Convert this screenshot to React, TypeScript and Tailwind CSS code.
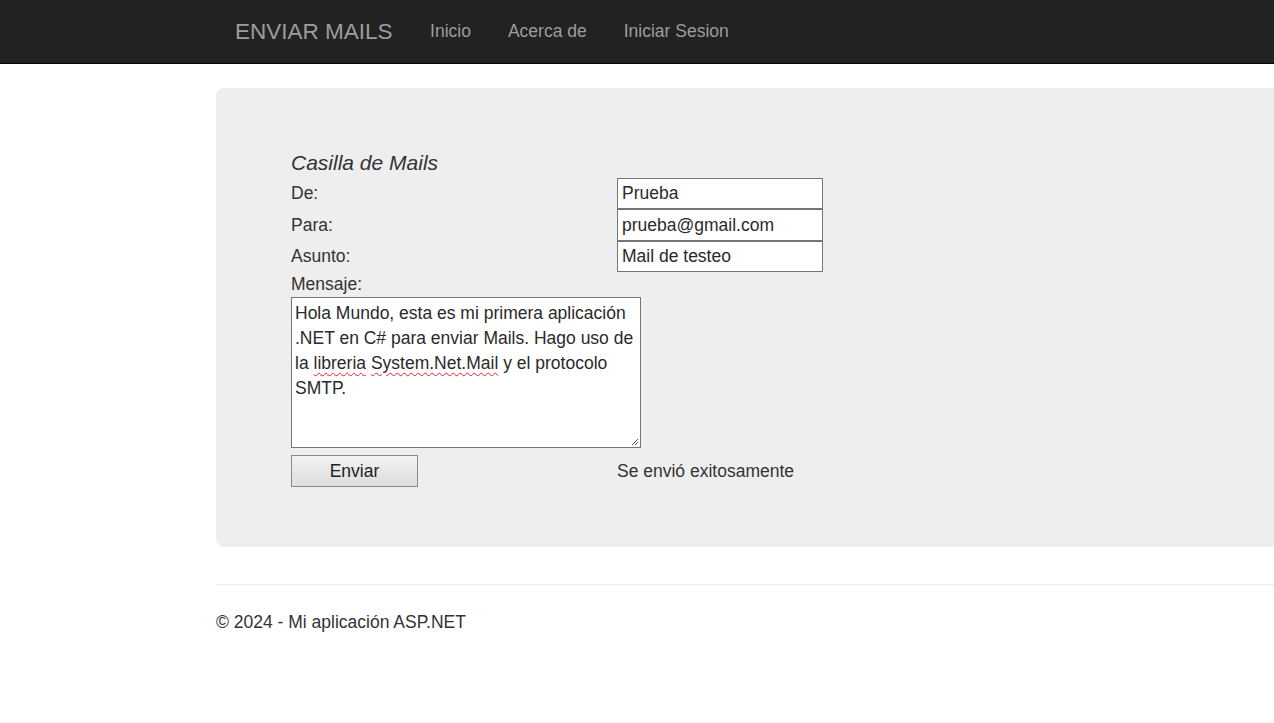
import React from 'react';

const font = { fontFamily: '"Liberation Sans", Arial, Helvetica, sans-serif' };

const NavBar = () => (
  <nav className="h-[64px] w-full bg-[#222222] border-b border-[#080808]">
    <div className="ml-[216px] flex h-full items-center pl-[19px]">
      <span className="text-[22.5px] text-[#9d9d9d] pr-[18px] mr-[1px]">ENVIAR MAILS</span>
      {['Inicio', 'Acerca de', 'Iniciar Sesion'].map((l) => (
        <span key={l} className="px-[18.5px] text-[17.5px] text-[#9d9d9d]">
          {l}
        </span>
      ))}
    </div>
  </nav>
);

const Field = ({ label, value, h }: { label: string; value: string; h: string }) => (
  <>
    <div className="flex items-center">{label}</div>
    <div className={`flex ${h} w-[206px] items-center border border-[#767676] bg-white px-[4px] text-[#2a2a2a]`}>
      {value}
    </div>
  </>
);

export default function App() {
  return (
    <div style={font} className="min-h-[723px] w-full overflow-hidden bg-white text-[#333333]">
      <NavBar />

      {/* body content */}
      <div className="ml-[216px] w-[1200px]">
        <div className="mt-[24px] rounded-l-[8px] bg-[#eeeeee] pl-[75px] pt-[60px] pb-[60px]">
          <div className="grid grid-cols-[326px_auto] text-[17.5px]">
            <div className="col-span-2 h-[30px] text-[21px] italic leading-[30px]">Casilla de Mails</div>
            <Field label="De:" value="Prueba" h="h-[31px]" />
            <Field label="Para:" value="prueba@gmail.com" h="h-[32px]" />
            <Field label="Asunto:" value="Mail de testeo" h="h-[31px]" />
            <div className="col-span-2 h-[25px] leading-[25px]">Mensaje:</div>
            <div className="col-span-2">
              <div className="relative h-[151px] w-[350px] border border-[#767676] bg-white px-[3px] pt-[3px] text-[17.5px] leading-[25px] text-[#2a2a2a]">
                Hola Mundo, esta es mi primera aplicación .NET en C# para enviar Mails. Hago uso de la{' '}
                <span className="underline decoration-wavy decoration-[#e0242a] decoration-1 underline-offset-[3px]">
                  libreria
                </span>{' '}
                <span className="underline decoration-wavy decoration-[#e0242a] decoration-1 underline-offset-[3px]">
                  System.Net.Mail
                </span>{' '}
                y el protocolo SMTP.
                <svg className="absolute bottom-[1px] right-[1px]" width="9" height="9" viewBox="0 0 9 9">
                  <path d="M8 2 L2 8 M8 5 L5 8" stroke="#555" strokeWidth="1" />
                </svg>
              </div>
            </div>
            <div className="mt-[7px]">
              <button className="h-[32px] w-[127px] border border-[#8a8a8a] bg-gradient-to-b from-[#f2f2f2] to-[#dddddd] text-[17.5px] text-[#222]">
                Enviar
              </button>
            </div>
            <div className="mt-[7px] flex items-center">Se envió exitosamente</div>
          </div>
        </div>

        {/* footer */}
        <hr className="mt-[37px] border-t border-[#eeeeee]" />
        <footer className="mt-[25px] text-[17.5px] leading-[25px]">© 2024 - Mi aplicación ASP.NET</footer>
      </div>
    </div>
  );
}
